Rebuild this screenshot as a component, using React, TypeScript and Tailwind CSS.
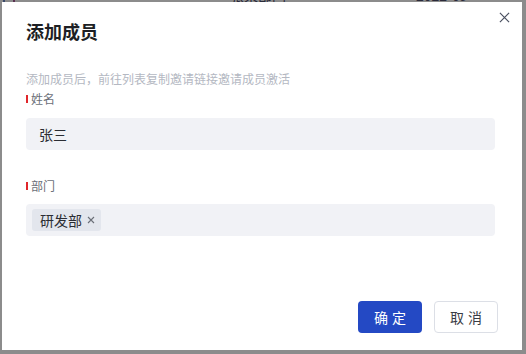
import React from "react";

export default function App() {
  return (
    <div
      className="relative w-[526px] h-[354px] overflow-hidden bg-[#8c8c8c]"
      style={{ fontFamily: '"Noto Sans CJK SC", "Noto Sans", sans-serif' }}
    >
      {/* background page fragments peeking at top */}
      <div className="absolute left-0 top-[-12px] w-full flex text-[14px] text-[#2a2a3a] leading-[14px]">
        <span className="ml-[3px] w-[2px] h-[14px] bg-[#3a4a6a]" />
        <span className="ml-[8px] w-[2px] h-[14px] bg-[#5a3050]" />
        <span className="ml-[215px]">张某部门</span>
        <span className="ml-[130px]">2022-09</span>
      </div>
      <div className="absolute left-[2px] top-[2px] w-[520px] h-[348px] bg-white">
        <div className="flex flex-col h-full pl-[24px] pr-[24px]">
          <div className="flex items-start justify-between pt-[17px]">
            <h1 className="text-[18px] leading-[24px] font-bold text-[#1d1f24]">添加成员</h1>
            <button className="mt-[-10px] mr-[-14px] w-[16px] h-[16px] flex items-center justify-center text-[#4a5060]">
              <svg width="11" height="11" viewBox="0 0 12 12" fill="none" stroke="currentColor" strokeWidth="1.3">
                <path d="M1 1L11 11M11 1L1 11" />
              </svg>
            </button>
          </div>
          <p className="mt-[28px] text-[12px] leading-[16px] text-[#b4b8c2]">
            添加成员后，前往列表复制邀请链接邀请成员激活
          </p>
          <div className="mt-[4px] flex items-center text-[12px] leading-[16px] text-[#6b6f78]">
            <span className="w-[2px] h-[8px] bg-[#e0262b] mr-[3px]" />
            姓名
          </div>
          <div className="mt-[11px] h-[32px] w-[469px] rounded-[4px] bg-[#f1f2f6] flex items-center pl-[13px] text-[14px] text-[#2b2d33]">
            张三
          </div>
          <div className="mt-[28px] flex items-center text-[12px] leading-[16px] text-[#6b6f78]">
            <span className="w-[2px] h-[8px] bg-[#e0262b] mr-[3px]" />
            部门
          </div>
          <div className="mt-[10px] h-[32px] w-[469px] rounded-[4px] bg-[#f1f2f6] flex items-center pl-[6px]">
            <span className="h-[22px] rounded-[3px] bg-[#e3e6ed] flex items-center pl-[8px] pr-[6px] text-[14px] text-[#2b2d33]">
              研发部
              <svg className="ml-[5px] text-[#6b6f78]" width="8" height="8" viewBox="0 0 8 8" fill="none" stroke="currentColor" strokeWidth="1.1">
                <path d="M1 1L7 7M7 1L1 7" />
              </svg>
            </span>
          </div>
          <div className="mt-auto mb-[17px] flex justify-end gap-[12px]">
            <button className="w-[64px] h-[32px] rounded-[4px] bg-[#2449c4] text-white text-[14px] tracking-[4px] pl-[4px]">
              确定
            </button>
            <button className="w-[64px] h-[32px] rounded-[4px] bg-white border border-[#dcdfe6] text-[#3a3d45] text-[14px] tracking-[4px] pl-[4px]">
              取消
            </button>
          </div>
        </div>
      </div>
    </div>
  );
}
